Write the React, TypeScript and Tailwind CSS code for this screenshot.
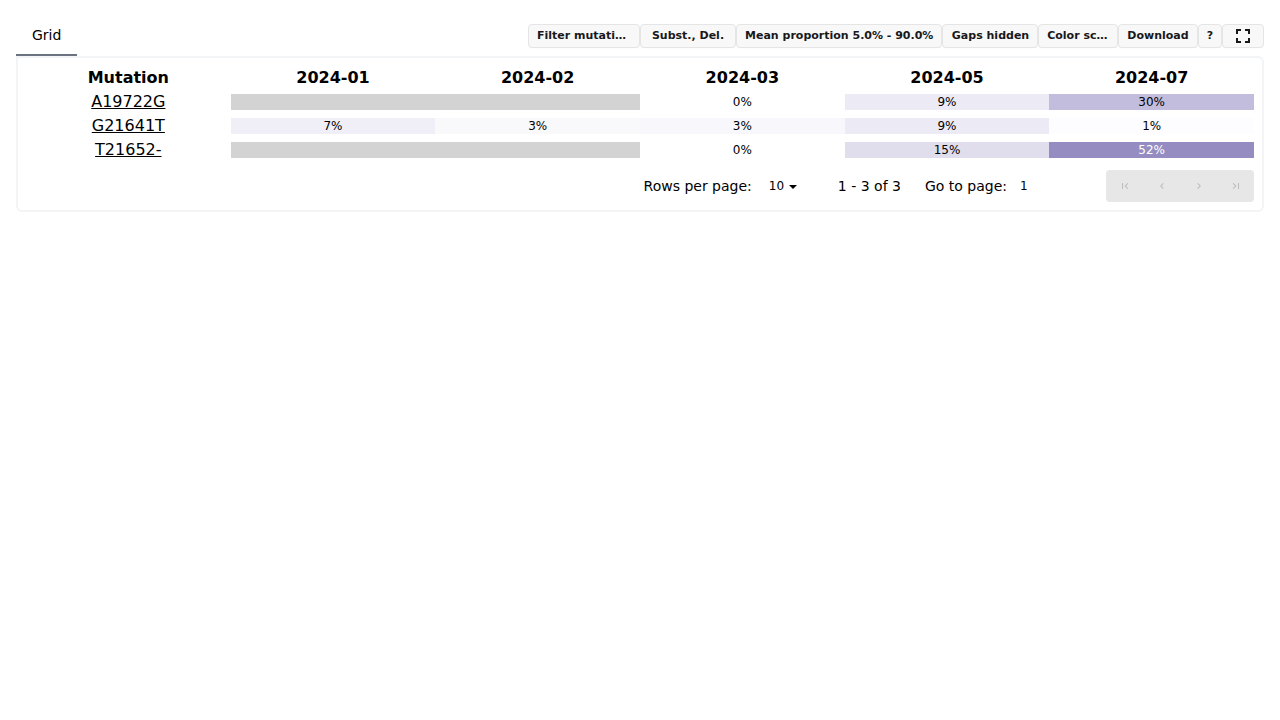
import type { ReactNode } from 'react';

type Cell = { label: string; color: string; light?: boolean } | null;

const dates = ['2024-01', '2024-02', '2024-03', '2024-05', '2024-07'];

const rows: { mutation: string; cells: Cell[] }[] = [
    {
        mutation: 'A19722G',
        cells: [
            null,
            null,
            { label: '0%', color: 'bg-white' },
            { label: '9%', color: 'bg-[#eceaf4]' },
            { label: '30%', color: 'bg-[#c2bcdd]' },
        ],
    },
    {
        mutation: 'G21641T',
        cells: [
            { label: '7%', color: 'bg-[#f0eff8]' },
            { label: '3%', color: 'bg-[#f9f9fc]' },
            { label: '3%', color: 'bg-[#f8f8fc]' },
            { label: '9%', color: 'bg-[#eceaf4]' },
            { label: '1%', color: 'bg-[#fdfdff]' },
        ],
    },
    {
        mutation: 'T21652-',
        cells: [
            null,
            null,
            { label: '0%', color: 'bg-white' },
            { label: '15%', color: 'bg-[#e0deec]' },
            { label: '52%', color: 'bg-[#958cc1]', light: true },
        ],
    },
];

function ToolbarButton({ width, children }: { width: string; children: ReactNode }) {
    return (
        <button
            className={`${width} flex h-6 shrink-0 items-center justify-center rounded-sm border border-[#e5e5e5] bg-[#f8f8f8] px-2 text-[11px] font-semibold leading-none text-[#18181b] shadow-[0_1px_1px_-1px_rgba(0,0,0,0.08)]`}
        >
            {children}
        </button>
    );
}

function PageButton({ children }: { children: string }) {
    return (
        <span className='flex w-[37px] items-center justify-center'>
            <svg width='12' height='12' viewBox='0 0 24 24' fill='#bcbcbc'>
                <path d={children} />
            </svg>
        </span>
    );
}

export default function App() {
    return (
        <div className="bg-white px-4 pt-4 font-['DejaVu_Sans',sans-serif] text-black">
            <div className='flex h-10 justify-between'>
                <div className='flex w-[61px] items-center border-b-2 border-[#6b7280] pl-4 text-sm'>Grid</div>
                <div className='flex items-center'>
                    <ToolbarButton width='w-[112px]'>
                        <span className='w-[94px] whitespace-nowrap pb-0.5 text-left'>Filter mutati…</span>
                    </ToolbarButton>
                    <ToolbarButton width='w-[96px]'>
                        <span className='whitespace-nowrap pb-0.5'>Subst., Del.</span>
                    </ToolbarButton>
                    <ToolbarButton width='w-[206px]'>
                        <span className='whitespace-nowrap pb-0.5 pl-[0.4px]'>Mean proportion 5.0% - 90.0%</span>
                    </ToolbarButton>
                    <ToolbarButton width='w-[96px]'>
                        <span className='whitespace-nowrap pb-0.5 pl-px'>Gaps hidden</span>
                    </ToolbarButton>
                    <ToolbarButton width='w-[80px]'>
                        <span className='w-[62px] whitespace-nowrap pb-0.5 pl-[0.2px] text-left'>Color sc…</span>
                    </ToolbarButton>
                    <ToolbarButton width='w-[80px]'>
                        <span className='pb-0.5'>Download</span>
                    </ToolbarButton>
                    <ToolbarButton width='w-[24px]'>
                        <span className='pb-0.5'>?</span>
                    </ToolbarButton>
                    <ToolbarButton width='w-[42px]'>
                        <svg width='24' height='24' viewBox='0 0 24 24' fill='currentColor' className='shrink-0'>
                            <path d='M5 5h5v2H7v3H5zM14 5h5v5h-2V7h-3zM5 14h2v3h3v2H5zM17 14h2v5h-5v-2h3z' />
                        </svg>
                    </ToolbarButton>
                </div>
            </div>
            <div className='rounded-md rounded-tl-none border-2 border-gray-100 p-2'>
                <div className='grid grid-cols-6 text-center font-bold leading-6'>
                    <div>Mutation</div>
                    {dates.map((date) => (
                        <div key={date}>{date}</div>
                    ))}
                </div>
                {rows.map((row) => (
                    <div key={row.mutation} className='grid h-6 grid-cols-6 items-center text-center'>
                        <div className='leading-6 underline'>{row.mutation}</div>
                        {row.cells.map((cell, i) => (
                            <div
                                key={dates[i]}
                                className={`h-4 text-xs leading-4 ${cell ? cell.color : 'bg-[#d3d3d3]'} ${cell?.light ? 'text-white' : 'text-black'}`}
                            >
                                {cell?.label}
                            </div>
                        ))}
                    </div>
                ))}
                <div className='mt-2 flex h-8 items-center justify-end text-sm'>
                    <span>Rows per page:</span>
                    <span className='ml-[17px] text-xs'>10</span>
                    <svg width='8' height='4' viewBox='0 0 8 4' className='ml-[4.7px] mt-px'>
                        <path d='M0 0h8L4 4z' />
                    </svg>
                    <span className='ml-[41.1px]'>1 - 3 of 3</span>
                    <span className='ml-6'>Go to page:</span>
                    <span className='ml-[13px] w-[86px] text-xs'>1</span>
                    <div className='flex h-8 w-[148px] rounded-sm bg-[#e7e7e7]'>
                        <PageButton>M18.41 16.59L13.82 12l4.59-4.59L17 6l-6 6 6 6zM6 6h2v12H6z</PageButton>
                        <PageButton>M15.41 7.41L14 6l-6 6 6 6 1.41-1.41L10.83 12z</PageButton>
                        <PageButton>M10 6L8.59 7.41 13.17 12l-4.58 4.59L10 18l6-6z</PageButton>
                        <PageButton>M5.59 7.41L10.18 12l-4.59 4.59L7 18l6-6-6-6zM16 6h2v12h-2z</PageButton>
                    </div>
                </div>
            </div>
        </div>
    );
}
